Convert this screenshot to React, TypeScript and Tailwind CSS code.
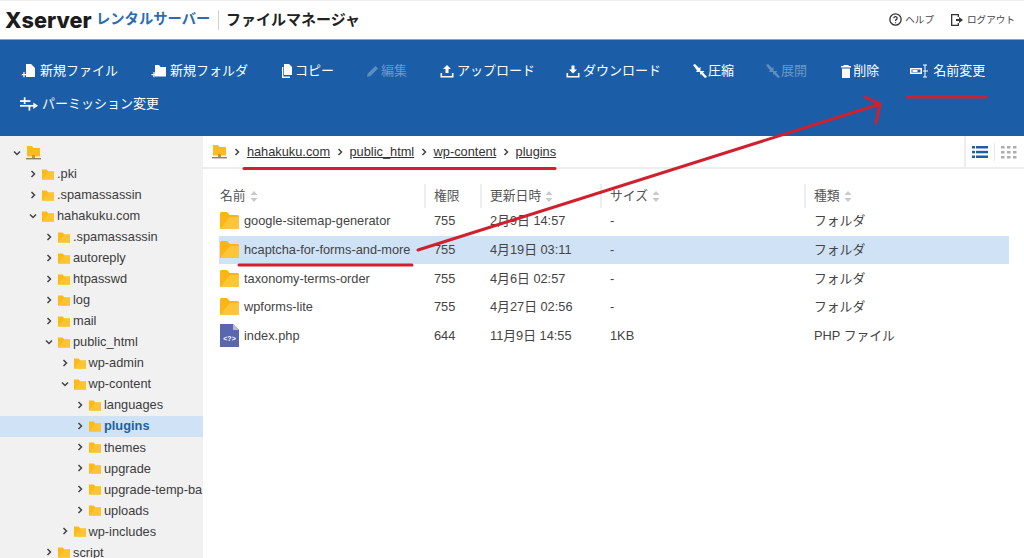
import React from "react";

const FONT = "[font-family:'Liberation_Sans','Noto_Sans_CJK_JP',sans-serif]";

function Folder({ className = "w-[13px] h-[12px]" }: { className?: string }) {
  return (
    <svg viewBox="0 0 13 12" className={className}>
      <path d="M0 1h5l2 2.200h6V12H0z" fill="#fdb915" />
      <path d="M0 12L7 3.200h6V12z" fill="#fcc432" />
    </svg>
  );
}

function BigFolder() {
  return (
    <svg viewBox="0 0 19 17" className="w-[19px] h-[17px]">
      <path d="M0 1.500C0 .7.7 0 1.500 0H7l3 3h7.500c.8 0 1.500.7 1.500 1.500V17H0z" fill="#fdb515" />
      <path d="M0 17L10 5h9v12z" fill="#fdc63a" />
    </svg>
  );
}

function RootIcon({ className }: { className: string }) {
  return (
    <svg viewBox="0 0 15 14" className={className}>
      <path d="M1 0h5l1.500 2H14v8.500H1z" fill="#fdbb1f" />
      <rect x="6" y="9" width="3" height="3" fill="#c99a2a" />
      <rect x="0" y="12" width="15" height="1.400" fill="#8a8062" />
    </svg>
  );
}

function Chev({ open, className = "" }: { open?: boolean; className?: string }) {
  return (
    <svg viewBox="0 0 8 8" className={`w-[8px] h-[8px] shrink-0 ${className}`} fill="none" stroke="#444" strokeWidth="1.500">
      {open ? <path d="M1 2.500l3 3 3-3" /> : <path d="M2.500 1l3 3-3 3" />}
    </svg>
  );
}

const tree: { d: number; t: string; open?: boolean; sel?: boolean }[] = [
  { d: 1, t: ".pki" },
  { d: 1, t: ".spamassassin" },
  { d: 1, t: "hahakuku.com", open: true },
  { d: 2, t: ".spamassassin" },
  { d: 2, t: "autoreply" },
  { d: 2, t: "htpasswd" },
  { d: 2, t: "log" },
  { d: 2, t: "mail" },
  { d: 2, t: "public_html", open: true },
  { d: 3, t: "wp-admin" },
  { d: 3, t: "wp-content", open: true },
  { d: 4, t: "languages" },
  { d: 4, t: "plugins", sel: true },
  { d: 4, t: "themes" },
  { d: 4, t: "upgrade" },
  { d: 4, t: "upgrade-temp-ba" },
  { d: 4, t: "uploads" },
  { d: 3, t: "wp-includes" },
  { d: 2, t: "script" },
];

const indent: Record<number, string> = { 1: "pl-[29px]", 2: "pl-[45px]", 3: "pl-[60.500px]", 4: "pl-[76px]" };

function Ic({ d, dim }: { d: React.ReactNode; dim?: boolean }) {
  return (
    <svg viewBox="0 0 16 16" className="w-[16px] h-[16px] shrink-0" fill={dim ? "#5f8dc0" : "#fff"}>
      {d}
    </svg>
  );
}

const newFile = (
  <>
    <path d="M6 1h5l4 4v9H6z" />
    <path d="M2 11h1.400V9h1.200v2H6.500v1.200H4.600v2H3.400v-2H1.500z" />
  </>
);
const newFolder = (
  <>
    <path d="M5 2h4l1.500 2H16v9.500H5z" />
    <path d="M1.500 11h1.900V9h1.200v2h1.900v1.200H4.600v2H3.400v-2H1.500z" />
  </>
);
const copy = (
  <>
    <path d="M5 1h5l3 3v8H5z" />
    <path d="M3 4v11h8v-1.400H4.300V4z" />
  </>
);
const pencil = <path d="M2 14l.8-3.500L10.500 3l2.500 2.500L5.500 13z" />;
const upload = (
  <>
    <path d="M8 2l4 4H9.500v4h-3V6H4z" />
    <path d="M1.500 10h1.600v3h9.800v-3h1.600v4.500h-13z" />
  </>
);
const download = (
  <>
    <path d="M8 10.500l-4-4h2.500V2.500h3v4H12z" />
    <path d="M1.500 10h1.600v3h9.800v-3h1.600v4.500h-13z" />
  </>
);
const compress = (
  <>
    <path d="M1 2l2-1 4 4 1.500-1v5H4l1-1.500z" />
    <path d="M15 14l-2 1-4-4-1 1V8h4.500L11 9.500z" />
  </>
);
const trash = (
  <>
    <path d="M5.500 2h5v1H13v1.500H3V3h2.500z" />
    <path d="M4 5.500h8V15H4z" />
  </>
);

function Tool({ icon, label, dim, gap = "gap-0", ml = "", narrow }: { icon: React.ReactNode; label: string; dim?: boolean; gap?: string; ml?: string; narrow?: boolean }) {
  return (
    <div className={`flex items-center ${gap} ${ml} ${dim ? "text-[#6d97c6]" : "text-white"}`}>
      <span className={narrow ? "w-[15px] overflow-hidden flex" : "flex"}>
        <Ic d={icon} dim={dim} />
      </span>
      <span className="whitespace-nowrap">{label}</span>
    </div>
  );
}

const rows = [
  ["google-sitemap-generator", "755", "2月9日 14:57", "-", "フォルダ"],
  ["hcaptcha-for-forms-and-more", "755", "4月19日 03:11", "-", "フォルダ"],
  ["taxonomy-terms-order", "755", "4月6日 02:57", "-", "フォルダ"],
  ["wpforms-lite", "755", "4月27日 02:56", "-", "フォルダ"],
  ["index.php", "644", "11月9日 14:55", "1KB", "PHP ファイル"],
];

const COLS = "grid grid-cols-[205px_56px_120px_204px_205px]";

function Sort() {
  return (
    <svg viewBox="0 0 8 11" className="w-[8px] h-[11px] ml-[4px]" fill="#c9c9c9">
      <path d="M4 0l3.500 4h-7zM4 11L.5 7h7z" />
    </svg>
  );
}

function Crumb({ t }: { t: string }) {
  return (
    <>
      <Chev className="mx-[5.700px]" />
      <span className="underline">{t}</span>
    </>
  );
}

export default function App() {
  return (
    <div className={`relative w-[1024px] h-[558px] overflow-hidden bg-white flex flex-col ${FONT}`}>
      <header className="h-[40px] shrink-0 flex items-center justify-between bg-white border-t border-t-[#eeeeee] border-b border-b-[#7fa6cf] pl-[5px] pr-[9px]">
        <div className="flex items-center">
          <span className="text-[21.700px] font-extrabold text-[#1c1c1c] [font-family:'Inter',sans-serif] w-[91px] shrink-0">Xserver</span>
          <span className="text-[14.300px] font-bold text-[#2a6cb3] w-[118px] shrink-0 whitespace-nowrap">レンタルサーバー</span>
          <span className="w-px h-[20px] bg-[#cfcfcf] ml-[4px] mr-[7px]" />
          <span className="text-[15px] font-bold text-[#222]">ファイルマネージャ</span>
        </div>
        <div className="flex items-center text-[9.600px] text-[#444]">
          <svg viewBox="0 0 12 12" className="w-[13px] h-[13px] mr-[3px]" fill="none" stroke="#333" strokeWidth="1.200">
            <circle cx="6" cy="6" r="5.200" />
            <path d="M4.500 4.800a1.500 1.500 0 1 1 2.200 1.300c-.5.3-.7.6-.7 1.200M6 8.500v1" />
          </svg>
          <span>ヘルプ</span>
          <svg viewBox="0 0 14 14" className="w-[14px] h-[14px] ml-[16px] mr-[3px]" fill="#333">
            <path d="M1 1h8v3H7.700V2.300H2.300v9.400h5.400V10H9v3H1z" />
            <path d="M6 6h3V4l4 3-4 3V8H6z" />
          </svg>
          <span>ログアウト</span>
        </div>
      </header>

      <div className="h-[96px] shrink-0 bg-[#1b5ea7] text-[13px] px-[20px] pt-[20px]">
        <div className="flex items-center h-[21px] gap-[31px]">
          <Tool icon={newFile} label="新規ファイル" gap="gap-[4px]" />
          <Tool icon={newFolder} label="新規フォルダ" gap="gap-[4px]" ml="ml-[1px]" />
          <Tool icon={copy} label="コピー" />
          <Tool icon={pencil} label="編集" dim />
          <Tool icon={upload} label="アップロード" gap="gap-[2px]" ml="ml-[1px]" />
          <Tool icon={download} label="ダウンロード" gap="gap-[2px]" ml="-ml-[1px]" />
          <Tool icon={compress} label="圧縮" />
          <Tool icon={compress} label="展開" dim />
          <Tool icon={trash} label="削除" narrow />
          <div className="flex items-center gap-[3px] text-white">
            <svg viewBox="0 0 20 14" className="w-[20px] h-[14px]" fill="#fff">
              <path d="M0 4h12v6H0zM1.500 5.500v3h9v-3z" fillRule="evenodd" />
              <rect x="2.500" y="6" width="5" height="2" />
              <path d="M15 1v12M13 1h4M13 13h4M13 7h5" stroke="#fff" strokeWidth="1" fill="none" />
            </svg>
            <span className="whitespace-nowrap">名前変更</span>
          </div>
        </div>
        <div className="flex items-center h-[21px] mt-[12px] gap-[3px] text-white">
          <svg viewBox="0 0 20 16" className="w-[19px] h-[16px]" fill="#fff">
            <rect x="0" y="4" width="11" height="1.800" />
            <rect x="4" y="1" width="1.800" height="7" />
            <rect x="0" y="9" width="16" height="1.800" />
            <path d="M14 6.500l5 3.400-5 3.400z" />
            <rect x="9" y="9" width="1.800" height="6" />
          </svg>
          <span>パーミッション変更</span>
        </div>
      </div>

      <div className="flex-1 flex min-h-0">
        <aside className="w-[203px] shrink-0 bg-[#f1f1f1] overflow-hidden pt-[6px] text-[12.800px] text-[#3c3c3c]">
          <div className="h-[21px] flex items-center pl-[13px]">
            <Chev open />
            <RootIcon className="w-[15px] h-[14px] ml-[5px]" />
          </div>
          {tree.map((n, i) => (
            <div key={i} className={`h-[21.050px] flex items-center whitespace-nowrap ${indent[n.d]} ${n.sel ? "bg-[#cfe2f6] font-bold text-[#23619f]" : ""}`}>
              <Chev open={n.open} />
              <Folder className="w-[12px] h-[12px] ml-[5px] shrink-0" />
              <span className="ml-[3px]">{n.t}</span>
            </div>
          ))}
        </aside>

        <main className="flex-1 min-w-0 text-[12.800px] text-[#444]">
          <div className="h-[33px] flex items-center border-b-2 border-b-[#eeeeee]">
            <div className="flex-1 flex items-center pl-[9px] text-[#333]">
              <RootIcon className="w-[15px] h-[14px] mr-[0.500px]" />
              {["hahakuku.com", "public_html", "wp-content", "plugins"].map((t) => (
                <Crumb key={t} t={t} />
              ))}
            </div>
            <div className="w-[60px] h-full flex items-center border-l-2 border-l-[#eeeeee] pl-[6px]">
              <svg viewBox="0 0 16 14" className="w-[16px] h-[14px]" fill="#1f5f9f">
                <rect x="0" y="1" width="3" height="2.500" />
                <rect x="4" y="1" width="12" height="2.500" />
                <rect x="0" y="5.800" width="3" height="2.500" />
                <rect x="4" y="5.800" width="12" height="2.500" />
                <rect x="0" y="10.500" width="3" height="2.500" />
                <rect x="4" y="10.500" width="12" height="2.500" />
              </svg>
              <span className="w-px h-[18px] bg-[#e8e8e8] mx-[6px]" />
              <svg viewBox="0 0 16 14" className="w-[16px] h-[14px]" fill="#aeaeae">
                {[0, 6, 12].flatMap((x) =>
                  [1, 6, 11].map((y) => <rect key={`${x}-${y}`} x={x} y={y} width="3.500" height="2.500" />)
                )}
              </svg>
            </div>
          </div>

          <div className="ml-[16px] w-[790px] mt-[15px]">
            <div className={`${COLS} h-[24px] items-stretch text-[#555]`}>
              {["名前", "権限", "更新日時", "サイズ", "種類"].map((h, i) => (
                <div key={h} className={`flex items-center pl-[1px] ${i > 0 ? "border-l-2 border-l-[#eeeeee] pl-[8px]" : ""}`}>
                  <span>{h}</span>
                  {i !== 1 && <Sort />}
                </div>
              ))}
            </div>
            <div className="-mt-[1px]">
              {rows.map((r, i) => (
                <div key={r[0]} className={`${COLS} h-[28.700px] pb-[1px] items-center ${i === 1 ? "bg-[#d0e2f6]" : ""}`}>
                  <div className="flex items-center pl-[1px]">
                    {i === 4 ? (
                      <svg viewBox="0 0 19 23" className="w-[19px] h-[23px]">
                        <path d="M0 0h13l6 6v17H0z" fill="#5a66ad" />
                        <path d="M13 0l6 6h-6z" fill="#b8bde0" />
                        <text x="9.500" y="17" textAnchor="middle" fontSize="7" fontWeight="bold" fill="#fff">{"<?>"}</text>
                      </svg>
                    ) : (
                      <BigFolder />
                    )}
                    <span className="ml-[5px] whitespace-nowrap">{r[0]}</span>
                  </div>
                  <div className="pl-[10px]">{r[1]}</div>
                  <div className="pl-[10px] whitespace-nowrap">{r[2]}</div>
                  <div className="pl-[10px]">{r[3]}</div>
                  <div className="pl-[10px]">{r[4]}</div>
                </div>
              ))}
            </div>
          </div>
        </main>
      </div>

      <svg className="absolute inset-0 w-[1024px] h-[558px] pointer-events-none" viewBox="0 0 1024 558" fill="none" stroke="#d0202e" strokeWidth="3" strokeLinecap="round" strokeLinejoin="round">
        <path d="M418 250L880 104" />
        <path d="M865 97l15 7-4 19" />
        <path d="M907 97h79" />
        <path d="M244 168.500h311" />
        <path d="M239 265h173" />
      </svg>
    </div>
  );
}
